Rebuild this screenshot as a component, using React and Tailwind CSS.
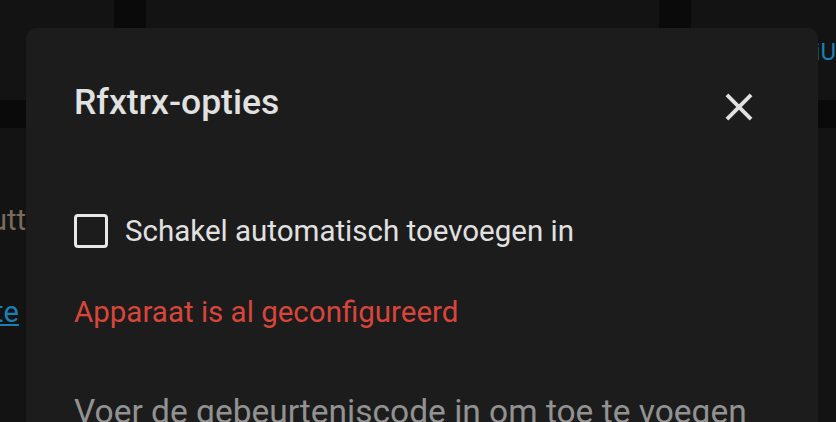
import React from 'react';

const font = { fontFamily: 'Roboto, "Noto Sans", sans-serif' };

const CloseIcon = () => (
  <svg viewBox="0 0 24 24" className="w-[46px] h-[46px] mt-[2px] shrink-0" fill="#e1e1e1">
    <path d="M19,6.41L17.59,5L12,10.59L6.41,5L5,6.41L10.59,12L5,17.59L6.41,19L12,13.41L17.59,19L19,17.59L13.41,12L19,6.41Z" />
  </svg>
);

const Backdrop = () => (
  <div className="flex flex-col h-full bg-[#0a0a0a] gap-[28px]">
    {/* top row cards */}
    <div className="flex h-[100px] gap-[32px] shrink-0">
      <div className="w-[115px] bg-[#131313]" />
      <div className="w-[515px] bg-[#131313]" />
      <div className="flex-1 bg-[#131313] pl-[124px] pt-[34px]">
        <span className="text-[24px] text-[#1b7fb4]">iU</span>
      </div>
    </div>
    {/* main card */}
    <div className="flex-1 bg-[#131313] flex flex-col">
      <span className="mt-[76px] ml-[-9px] text-[29px] leading-[32px] text-[#7a6c5c]">uttons</span>
      <span className="mt-[60px] ml-[-6px] text-[29px] leading-[32px] text-[#1b7fb4] underline">te</span>
    </div>
  </div>
);

export default function App() {
  return (
    <div className="relative w-full h-[422px] overflow-hidden bg-[#0a0a0a]" style={font}>
      <Backdrop />
      {/* dialog */}
      <div className="absolute left-[26px] top-[28px] w-[792px] h-[440px] bg-[#1c1c1c] rounded-[10px] pl-[48px] pr-[56px] pt-[54px] flex flex-col">
        <div className="flex justify-between items-start">
          <h2 className="text-[35.5px] leading-[40px] font-medium text-[#e1e1e1]">Rfxtrx-opties</h2>
          <CloseIcon />
        </div>
        <label className="mt-[84px] flex items-center gap-[17px] h-[34px]">
          <span className="w-[34px] h-[34px] border-[3px] border-[#e8e8e8] rounded-[4px] shrink-0" />
          <span className="text-[29.5px] leading-[34px] text-[#e1e1e1]">Schakel automatisch toevoegen in</span>
        </label>
        <p className="mt-[47px] text-[29.5px] leading-[34px] text-[#d8453a]">Apparaat is al geconfigureerd</p>
        <p className="mt-[64px] text-[33.5px] leading-[38px] text-[#929292] whitespace-nowrap">Voer de gebeurteniscode in om toe te voegen</p>
      </div>
    </div>
  );
}
